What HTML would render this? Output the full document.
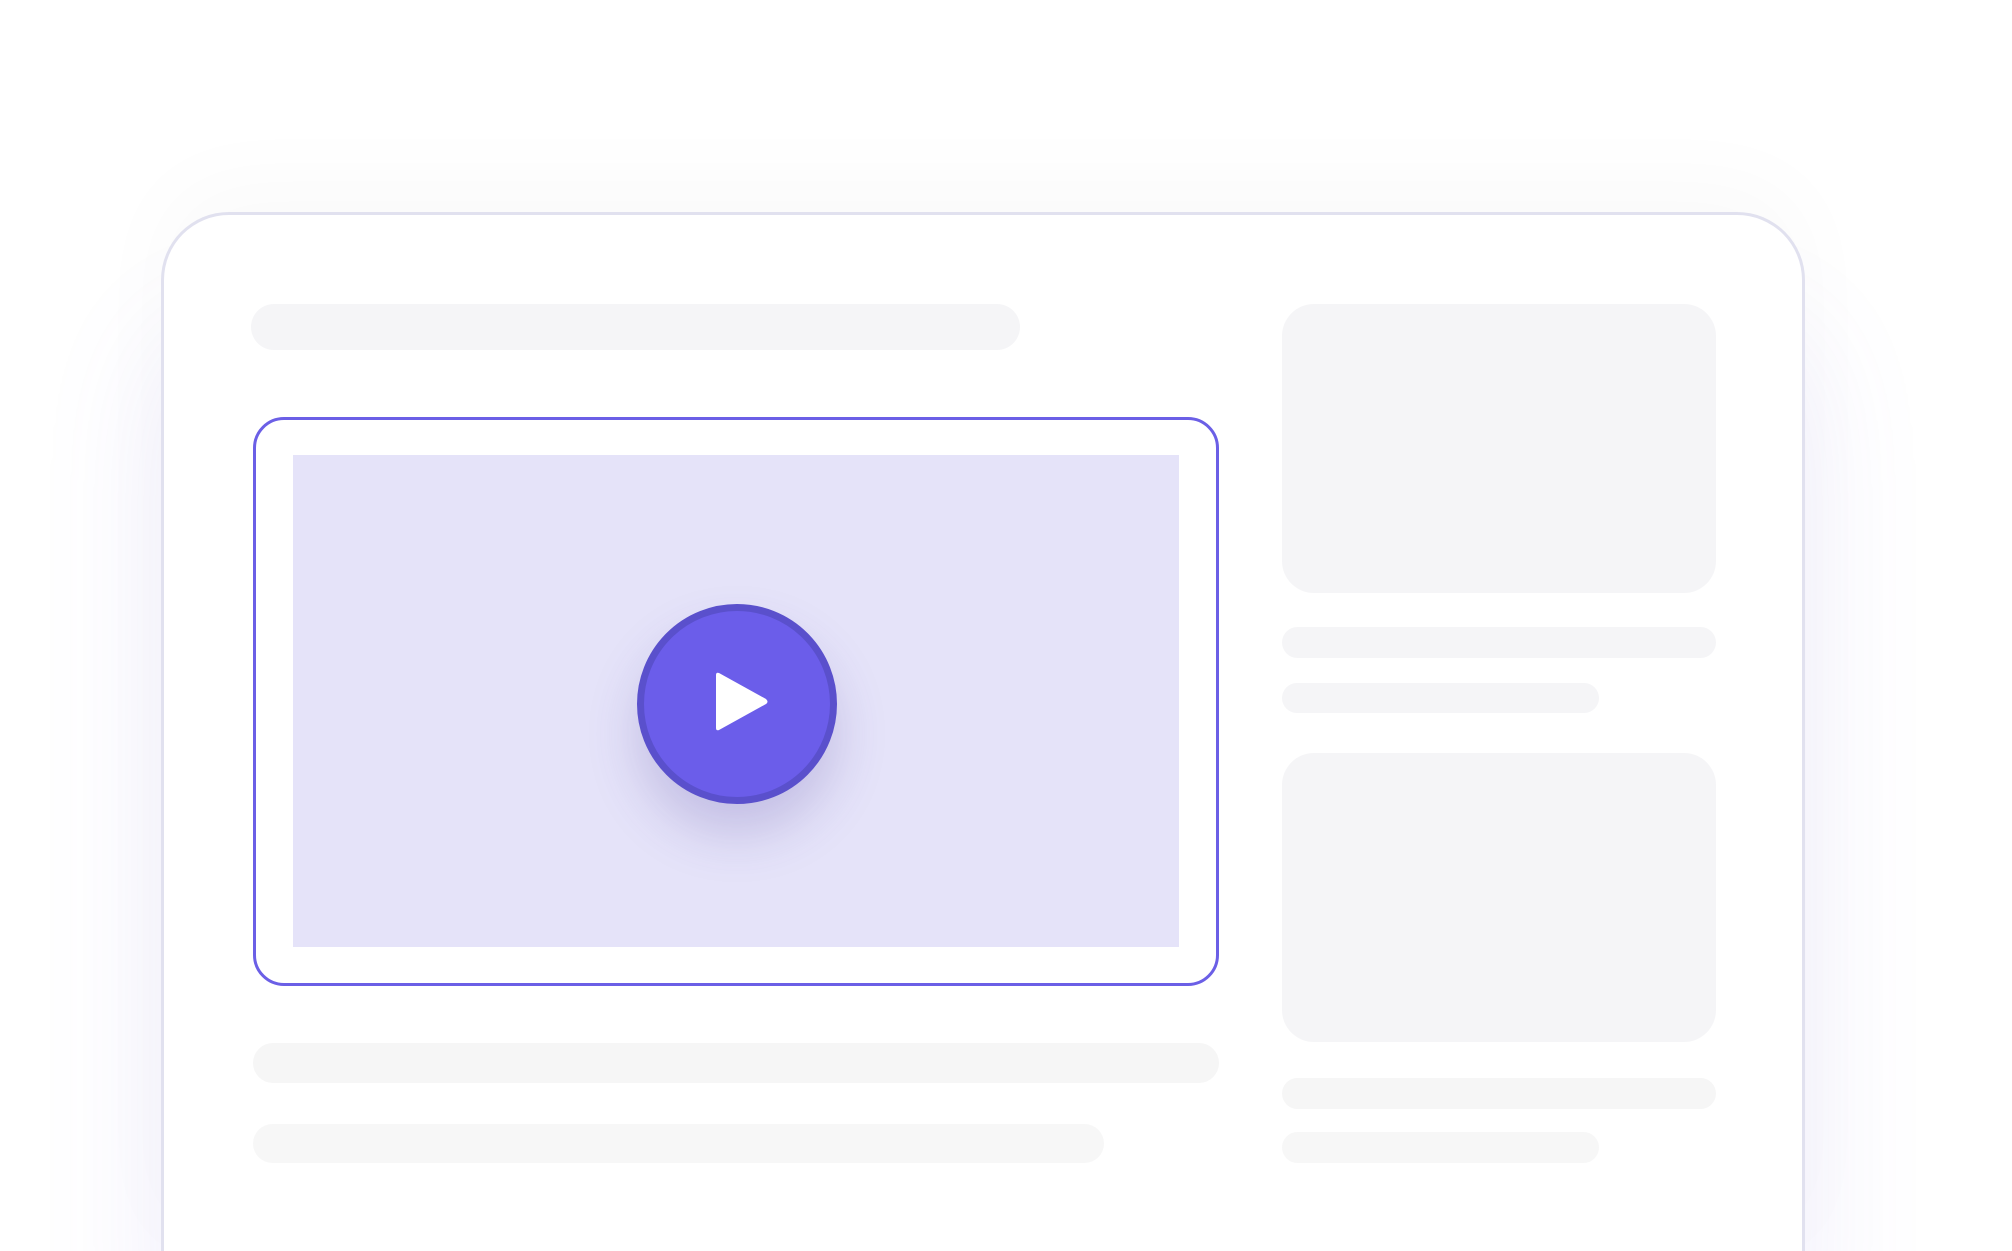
<!DOCTYPE html>
<html><head><meta charset="utf-8"><style>
html,body{margin:0;padding:0;width:2012px;height:1251px;overflow:hidden}
body{background:#fff;font-family:"Liberation Sans",sans-serif}
#wrap{position:relative;width:2012px;height:1251px;overflow:hidden;background:#fff}
.card{position:absolute;left:161px;top:212px;width:1638px;height:1039px;border:3px solid #e1e1ef;border-bottom:none;border-radius:68px 68px 0 0;background:#fff;box-shadow:0 -30px 90px rgba(0,0,0,0.025),0 120px 180px rgba(120,100,230,0.11)}
.b{position:absolute;background:#f5f5f7}
.pill{border-radius:30px}
.frame{position:absolute;left:253px;top:417px;width:960px;height:563px;border:3px solid #6b5fe6;border-radius:31px}
.inner{position:absolute;left:293px;top:455px;width:886px;height:492px;background:#e5e3f9}
.play{position:absolute;left:637px;top:604px;width:186px;height:186px;border:7px solid #5a50cc;border-radius:50%;background:#6b5dea;box-shadow:0 30px 50px rgba(80,70,160,0.22)}
</style></head><body><div id="wrap">
<div class="card"></div>
<div class="b pill" style="left:251px;top:304px;width:769px;height:46px"></div>
<div class="frame"></div>
<div class="inner"></div>
<div class="play"></div>
<svg style="position:absolute;left:0;top:0" width="2012" height="1251"><path d="M716 675 Q716 672 719 673 L766 699 Q769 702 766 704 L719 730 Q716 731 716 728 Z" fill="#fff"/></svg>
<div class="b pill" style="left:253px;top:1043px;width:966px;height:40px;background:#f6f6f6"></div>
<div class="b pill" style="left:253px;top:1124px;width:851px;height:39px;background:#f7f7f7"></div>
<div class="b" style="left:1282px;top:304px;width:434px;height:289px;border-radius:32px"></div>
<div class="b pill" style="left:1282px;top:627px;width:434px;height:31px"></div>
<div class="b pill" style="left:1282px;top:683px;width:317px;height:30px"></div>
<div class="b" style="left:1282px;top:753px;width:434px;height:289px;border-radius:32px"></div>
<div class="b pill" style="left:1282px;top:1078px;width:434px;height:31px;background:#f6f6f6"></div>
<div class="b pill" style="left:1282px;top:1132px;width:317px;height:31px;background:#f7f7f7"></div>
</div></body></html>
